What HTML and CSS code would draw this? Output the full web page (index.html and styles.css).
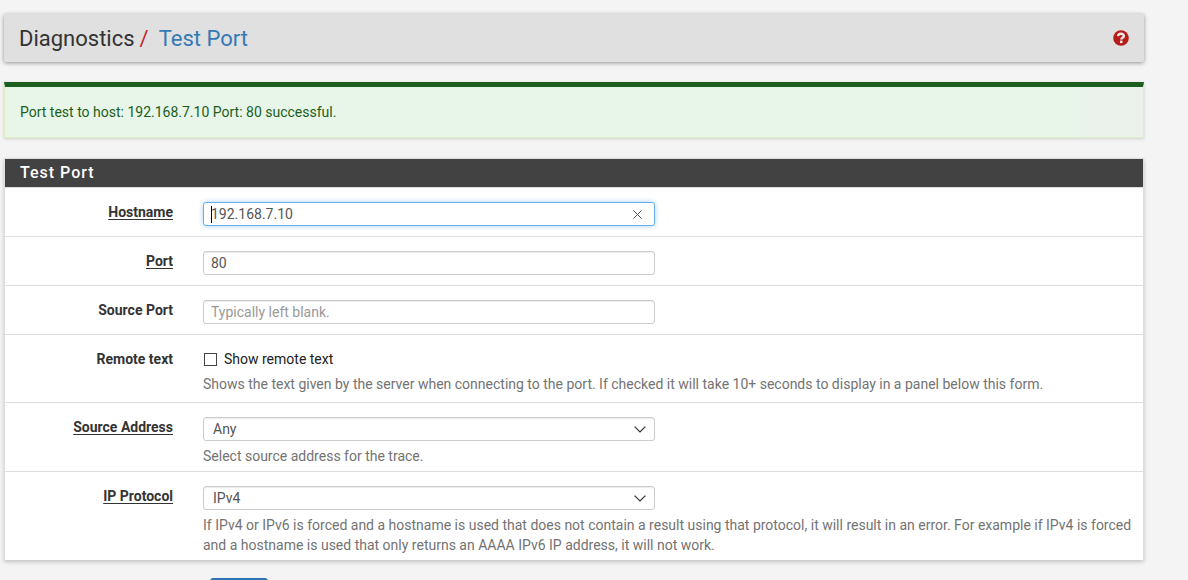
FILE: index.html
```html
<!DOCTYPE html>
<html lang="en">
<head>
<meta charset="utf-8">
<meta name="viewport" content="width=device-width, initial-scale=1">
<title>Diagnostics: Test Port</title>
<link rel="stylesheet" href="styles.css">
</head>
<body>
<main class="page">
  <header class="page-header">
    <h1 class="breadcrumb">Diagnostics<span class="separator">/</span><a href="#">Test Port</a></h1>
    <a class="help-link" href="#" aria-label="Help">
      <svg width="16" height="16" viewBox="0 0 16 16" aria-hidden="true">
        <circle cx="8" cy="8" r="7.8" fill="#b71c1c"/>
        <path d="M5 6.2C5.2 4.4 6.3 3.7 8 3.7c1.8 0 2.9.9 2.9 2.3 0 1.8-2.6 1.8-2.6 3.6" fill="none" stroke="#e8e8e8" stroke-width="2.4"/>
        <path d="M7 10.6h2.5v2.5H7z" fill="#e8e8e8"/>
      </svg>
    </a>
  </header>

  <div class="alert" role="status">
    <p class="alert-text">Port test to host: 192.168.7.10 Port: 80 successful.</p>
    <button class="alert-close" type="button" aria-label="Close"></button>
  </div>

  <form>
    <section class="panel">
      <h2 class="panel-title">Test Port</h2>
      <div class="row">
        <label class="row-label" for="host"><span class="required">Hostname</span></label>
        <div class="row-body">
          <div class="field focused">
            <input class="control" id="host" type="text" value="192.168.7.10">
            <span class="caret"></span>
            <button class="clear" type="button" aria-label="Clear">
              <svg width="9" height="9" viewBox="0 0 9 9" aria-hidden="true"><path d="M.4.4l8.2 8.2M8.6.4L.4 8.6" stroke="#555" fill="none"/></svg>
            </button>
          </div>
        </div>
      </div>
      <div class="row">
        <label class="row-label" for="port"><span class="required">Port</span></label>
        <div class="row-body">
          <div class="field"><input class="control" id="port" type="text" value="80"></div>
        </div>
      </div>
      <div class="row">
        <label class="row-label" for="srcport">Source Port</label>
        <div class="row-body">
          <div class="field"><input class="control" id="srcport" type="text" placeholder="Typically left blank."></div>
        </div>
      </div>
      <div class="row row-check">
        <span class="row-label">Remote text</span>
        <div class="row-body">
          <label class="check"><input class="check-box" type="checkbox">Show remote text</label>
          <p class="help">Shows the text given by the server when connecting to the port. If checked it will take 10+ seconds to display in a panel below this form.</p>
        </div>
      </div>
      <div class="row row-select">
        <label class="row-label" for="source"><span class="required">Source Address</span></label>
        <div class="row-body">
          <div class="field">
            <select class="control select" id="source"><option>Any</option></select>
            <svg class="chevron" width="12" height="7" viewBox="0 0 12 7" aria-hidden="true"><path d="M.6.6L6 6 11.4.6" stroke="#333" stroke-width="1.2" fill="none"/></svg>
          </div>
          <p class="help">Select source address for the trace.</p>
        </div>
      </div>
      <div class="row row-select">
        <label class="row-label" for="proto"><span class="required">IP Protocol</span></label>
        <div class="row-body">
          <div class="field">
            <select class="control select" id="proto"><option>IPv4</option></select>
            <svg class="chevron" width="12" height="7" viewBox="0 0 12 7" aria-hidden="true"><path d="M.6.6L6 6 11.4.6" stroke="#333" stroke-width="1.2" fill="none"/></svg>
          </div>
          <p class="help">If IPv4 or IPv6 is forced and a hostname is used that does not contain a result using that protocol, it will result in an error. For example if IPv4 is forced and a hostname is used that only returns an AAAA IPv6 IP address, it will not work.</p>
        </div>
      </div>
    </section>
    <button class="submit" type="submit">Test</button>
  </form>
</main>
</body>
</html>
```

FILE: styles.css
```css
* { box-sizing: border-box; }

body {
  margin: 0;
  background: #f4f4f4;
  color: #212121;
  font: 14px/20px Roboto, "Liberation Sans", sans-serif;
}

.page { padding: 14px 44px 0 4px; }

.page-header {
  display: flex;
  align-items: center;
  justify-content: space-between;
  height: 48px;
  margin-bottom: 20px;
  padding: 0 15px;
  border-radius: 2px;
  background: #e0e0e0;
  box-shadow: 0 1px 4px rgba(0, 0, 0, .4);
}

.breadcrumb {
  margin: 0;
  padding-top: 1px;
  color: #333;
  font-size: 22px;
  font-weight: 400;
  line-height: 23px;
}

.breadcrumb a { color: #337ab7; text-decoration: none; }
.separator { margin: 0 10px 0 5px; color: #c62828; }
.help-link { display: flex; }

.alert {
  display: flex;
  justify-content: space-between;
  margin-bottom: 20px;
  border: 1px solid #dcedc8;
  border-top: 5px solid #1b5e20;
  background: #e8f5e9;
  box-shadow: 0 1px 3px rgba(0, 0, 0, .15);
}

.alert-text { margin: 0; padding: 15px; color: #1b5e20; }

.alert-close {
  width: 64px;
  padding: 0;
  border: 0;
  background: #ebf1eb;
}

.panel {
  margin-bottom: 18px;
  border: 1px solid #ddd;
  border-bottom: 0;
  background: #fff;
  box-shadow: 0 2px 4px rgba(0, 0, 0, .2);
}

.panel-title {
  margin: 0;
  padding: 4px 15px;
  background: #424242;
  color: #fff;
  font-size: 16px;
  font-weight: 500;
  letter-spacing: 1px;
  line-height: 20px;
}

.row {
  display: grid;
  grid-template-columns: 168px 1fr;
  column-gap: 30px;
  padding: 14px 10px 10px 0;
  border-top: 1px solid #ddd;
}

.row-check { padding-bottom: 8px; }
.row-select { padding-bottom: 5px; }

.row-label {
  color: #333;
  font-weight: 700;
  text-align: right;
}

.required {
  text-decoration: underline 1px;
  text-decoration-skip-ink: none;
  text-underline-offset: 2px;
}

.field {
  position: relative;
  max-width: 452px;
}

.control {
  display: block;
  width: 100%;
  height: 24px;
  padding: 0 7px;
  border: 1px solid #ccc;
  border-radius: 3px;
  background: #fff;
  box-shadow: inset 0 1px 1px rgba(0, 0, 0, .08);
  color: #555;
  font: inherit;
}

.control::placeholder { color: #999; opacity: 1; }

.focused .control {
  border-color: #66afe9;
  box-shadow: 0 0 5px rgba(102, 175, 233, .6);
}

.select { padding: 0 9px; appearance: none; }

.caret {
  position: absolute;
  top: 4px;
  left: 8px;
  width: 1px;
  height: 17px;
  background: #000;
}

.clear {
  position: absolute;
  top: 8px;
  right: 13px;
  display: flex;
  padding: 0;
  border: 0;
  background: none;
}

.chevron {
  position: absolute;
  top: 9px;
  right: 9px;
  pointer-events: none;
}

.check {
  display: flex;
  align-items: center;
  gap: 7px;
}

.check-box {
  width: 13px;
  height: 13px;
  margin: 0 0 0 1px;
  border: 1px solid #444;
  background: #fff;
  appearance: none;
}

.help { margin: 5px 0 0; color: #737373; }

.submit {
  display: block;
  width: 58px;
  height: 32px;
  margin-left: 206px;
  border: 1px solid #286eb4;
  border-radius: 3px;
  background: #337ab7;
  color: #fff;
  font: inherit;
}
```
